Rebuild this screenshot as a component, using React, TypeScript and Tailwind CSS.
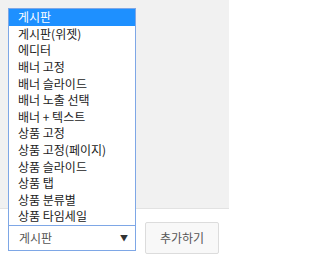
import React from "react";

const items = [
  "게시판",
  "게시판(위젯)",
  "에디터",
  "배너 고정",
  "배너 슬라이드",
  "배너 노출 선택",
  "배너 + 텍스트",
  "상품 고정",
  "상품 고정(페이지)",
  "상품 슬라이드",
  "상품 탭",
  "상품 분류별",
  "상품 타임세일",
];

export default function App() {
  return (
    <div
      className="relative w-[229px] h-[261px] bg-white overflow-hidden"
      style={{ fontFamily: '"Noto Sans CJK KR", "Noto Sans", sans-serif' }}
    >
      <div className="h-[209px] bg-[#f1f1f1] border-b border-[#e2e2e2]" />
      <div className="flex items-center gap-[9px] pl-[8px] pt-[13px]">
        <div className="relative flex items-center w-[128px] h-[26px] border border-[#7ea7e6] bg-white pl-[10px] text-[12px] text-[#555]">
          <span className="leading-none">게시판</span>
          <span className="absolute right-[7px] top-[8px] text-[8px] leading-none text-[#333]">▼</span>
        </div>
        <button className="w-[74px] h-[32px] border border-[#dcdcdc] bg-[#f8f8f8] rounded-[2px] text-[12px] text-[#555] leading-none">
          추가하기
        </button>
      </div>
      <div className="absolute left-[8px] top-[8px] w-[128px] h-[218px] border border-[#7ea7e6] bg-white flex flex-col">
        {items.map((t, i) => (
          <div
            key={t}
            className={
              i === 0
                ? "h-[16.6px] flex items-center pl-[9px] text-[12px] leading-none bg-[#1e90ff] text-white"
                : "h-[16.6px] flex items-center pl-[9px] text-[12px] leading-none text-[#222]"
            }
          >
            {t}
          </div>
        ))}
      </div>
    </div>
  );
}
